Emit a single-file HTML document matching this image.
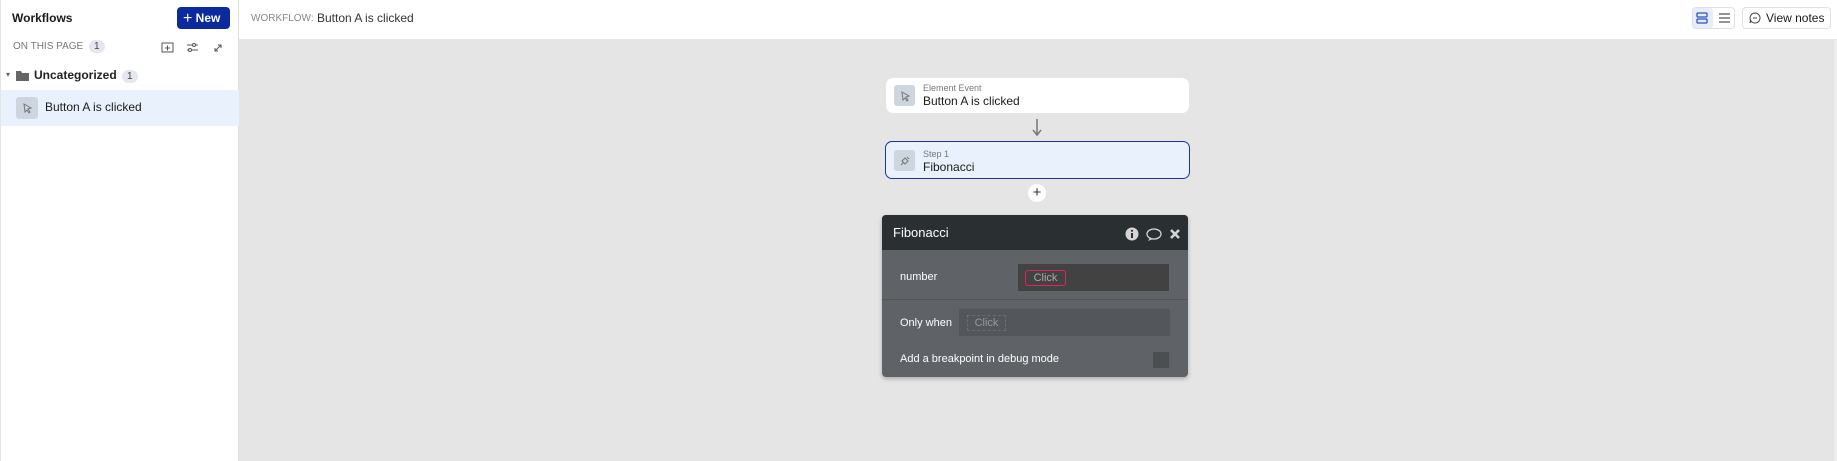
<!DOCTYPE html>
<html><head><meta charset="utf-8"><style>
*{box-sizing:border-box;margin:0;padding:0}
body{width:1837px;height:461px;overflow:hidden;font-family:"Liberation Sans",sans-serif;background:#e5e5e5;position:relative;color:#1a1a1a}
.abs{position:absolute}
#side{left:0;top:0;width:239px;height:461px;background:#fff;border-right:1px solid #ddd;border-left:1px solid #e4e4e4}
#top{left:239px;top:0;width:1598px;height:40px;background:#fff;border-bottom:1px solid #e8e8e8}
.badge{display:inline-block;background:#e4e8ee;border-radius:8px;font-size:10px;padding:1px 5px;color:#444}
.card{background:#fff;border-radius:7px}
.ib{background:#cdd5df;border-radius:3px;width:21px;height:21px}
</style></head><body>
<div id="side" class="abs">
  <div class="abs" style="left:11px;top:11px;font-size:12px;font-weight:bold">Workflows</div>
  <div class="abs" style="left:176px;top:7px;width:53px;height:22px;background:#0b2a9d;border-radius:4px;color:#fff;font-size:12px;font-weight:bold;line-height:22px;padding-left:6px"><span style="font-weight:normal;font-size:16px;vertical-align:-1px">+</span> New</div>
  <div class="abs" style="left:12px;top:40px;font-size:10px;color:#777">ON THIS PAGE <span class="badge" style="margin-left:3px">1</span></div>
  <svg class="abs" style="left:160px;top:41px" width="64" height="13" fill="none" stroke="#555" stroke-width="1">
    <rect x="1" y="2" width="11" height="9"/><path d="M4 7h5M6.5 4.5v5"/>
    <path d="M26 4h11M26 9h11"/><circle cx="33" cy="4" r="1.5" fill="#fff"/><circle cx="29" cy="9" r="1.5" fill="#fff"/>
    <path d="M54 10l6-6M57 4h3v3M54 7v3h3"/>
  </svg>
  <div class="abs" style="left:5px;top:70px;font-size:8px;color:#666">▾</div>
  <svg class="abs" style="left:15px;top:70px" width="14" height="11"><path d="M0 1h5l1 2h7v8H0z" fill="#666"/></svg>
  <div class="abs" style="left:33px;top:68px;font-size:12px;font-weight:bold;color:#222">Uncategorized <span class="badge" style="font-weight:normal;margin-left:2px">1</span></div>
  <div class="abs" style="left:0;top:90px;width:238px;height:36px;background:#e9f1fc"></div>
  <div class="abs ib" style="left:15px;top:97px;width:22px;height:22px"></div>
  <svg class="abs" style="left:20px;top:102px" width="12" height="12" fill="none" stroke="#777"><path d="M3 2l7 4-3 1 2 3-1 1-2-3-2 2z"/></svg>
  <div class="abs" style="left:44px;top:100px;font-size:12px">Button A is clicked</div>
</div>
<div id="top" class="abs">
  <div class="abs" style="left:12px;top:13px;font-size:10px;color:#888">WORKFLOW:</div>
  <div class="abs" style="left:78px;top:11px;font-size:12px;color:#333">Button A is clicked</div>
  <div class="abs" style="left:1453px;top:7px;width:43px;height:22px;border:1px solid #e0e0e0;border-radius:4px;background:#fff"></div>
  <div class="abs" style="left:1454px;top:8px;width:20px;height:20px;background:#e6eefc;border-radius:3px"></div>
  <svg class="abs" style="left:1457px;top:12px" width="36" height="12" fill="none" stroke-width="1.3"><rect x="1" y="1" width="10" height="4" rx="1" stroke="#2a4fc7"/><rect x="1" y="7" width="10" height="4" rx="1" stroke="#2a4fc7"/><path d="M23 2h11M23 6h11M23 10h11" stroke="#555"/></svg>
  <div class="abs" style="left:1503px;top:7px;width:89px;height:22px;border:1px solid #e0e0e0;border-radius:4px;background:#fff;font-size:12px;line-height:20px;padding-left:23px">View notes</div>
  <svg class="abs" style="left:1510px;top:12px" width="12" height="12" fill="none" stroke="#444"><path d="M6 1a5 5 0 1 1-4 8l-1 2 0.5-3A5 5 0 0 1 6 1z"/><path d="M4 6h4"/></svg>
</div>
<div class="abs" style="left:1834px;top:40px;width:3px;height:421px;background:#eee"></div>

<div class="abs card" style="left:886px;top:78px;width:303px;height:35px"></div>
<div class="abs ib" style="left:894px;top:85px"></div>
<svg class="abs" style="left:899px;top:90px" width="12" height="12" fill="none" stroke="#777"><path d="M3 2l7 4-3 1 2 3-1 1-2-3-2 2z"/></svg>
<div class="abs" style="left:923px;top:83px;font-size:9px;color:#777">Element Event</div>
<div class="abs" style="left:923px;top:94px;font-size:12px">Button A is clicked</div>
<svg class="abs" style="left:1032px;top:119px" width="10" height="18"><path d="M5 0v15M1 11l4 5 4-5" stroke="#777" stroke-width="1.5" fill="none"/></svg>
<div class="abs card" style="left:885px;top:141px;width:305px;height:38px;background:#e9f1fc;border:1.3px solid #1e36a0"></div>
<div class="abs ib" style="left:894px;top:150px"></div>
<svg class="abs" style="left:899px;top:155px" width="12" height="12" fill="none" stroke="#777"><path d="M2 10l3-3M6 3l3 3-3 3-3-3zM8 2l2 2"/></svg>
<div class="abs" style="left:923px;top:149px;font-size:9px;color:#777">Step 1</div>
<div class="abs" style="left:923px;top:160px;font-size:12px">Fibonacci</div>
<div class="abs" style="left:1028px;top:184px;width:18px;height:18px;border-radius:50%;background:#fff;text-align:center;line-height:17px;font-size:15px;color:#333">+</div>

<div class="abs" style="left:882px;top:215px;width:306px;height:162px;background:#5f6367;border-radius:4px;box-shadow:0 2px 4px rgba(0,0,0,.25);overflow:hidden">
  <div style="height:35px;background:#2a2f31;color:#fff;font-size:13px;padding:10px 11px">Fibonacci</div>
  <svg class="abs" style="left:243px;top:12px" width="60" height="15"><circle cx="7" cy="7" r="6.5" fill="#d5d5d5"/><rect x="6" y="6" width="2" height="5" fill="#2a2f31"/><circle cx="7" cy="3.8" r="1.1" fill="#2a2f31"/><ellipse cx="29" cy="7" rx="7" ry="5" fill="none" stroke="#d5d5d5" stroke-width="1.3"/><path d="M25 11l-2 3 5-2" fill="#d5d5d5"/><path d="M46 3l8 8M54 3l-8 8" stroke="#d5d5d5" stroke-width="2.6"/></svg>
  <div class="abs" style="left:18px;top:56px;font-size:11px;color:#fff">number</div>
  <div class="abs" style="left:136px;top:49px;width:151px;height:27px;background:#424242"></div>
  <div class="abs" style="left:143px;top:55px;width:41px;height:16px;border:1px solid #e0245e;border-radius:3px;color:#aaa;font-size:11px;text-align:center;line-height:14px">Click</div>
  <div class="abs" style="left:0;top:84px;width:306px;height:1px;background:#555"></div>
  <div class="abs" style="left:18px;top:102px;font-size:11px;color:#fff">Only when</div>
  <div class="abs" style="left:77px;top:94px;width:211px;height:27px;background:#53575b"></div>
  <div class="abs" style="left:85px;top:100px;width:39px;height:16px;border:1px dashed #6a6e72;color:#999;font-size:11px;text-align:center;line-height:14px">Click</div>
  <div class="abs" style="left:18px;top:138px;font-size:11px;color:#fff">Add a breakpoint in debug mode</div>
  <div class="abs" style="left:271px;top:137px;width:16px;height:16px;background:#4c4f52"></div>
</div>
</body></html>
